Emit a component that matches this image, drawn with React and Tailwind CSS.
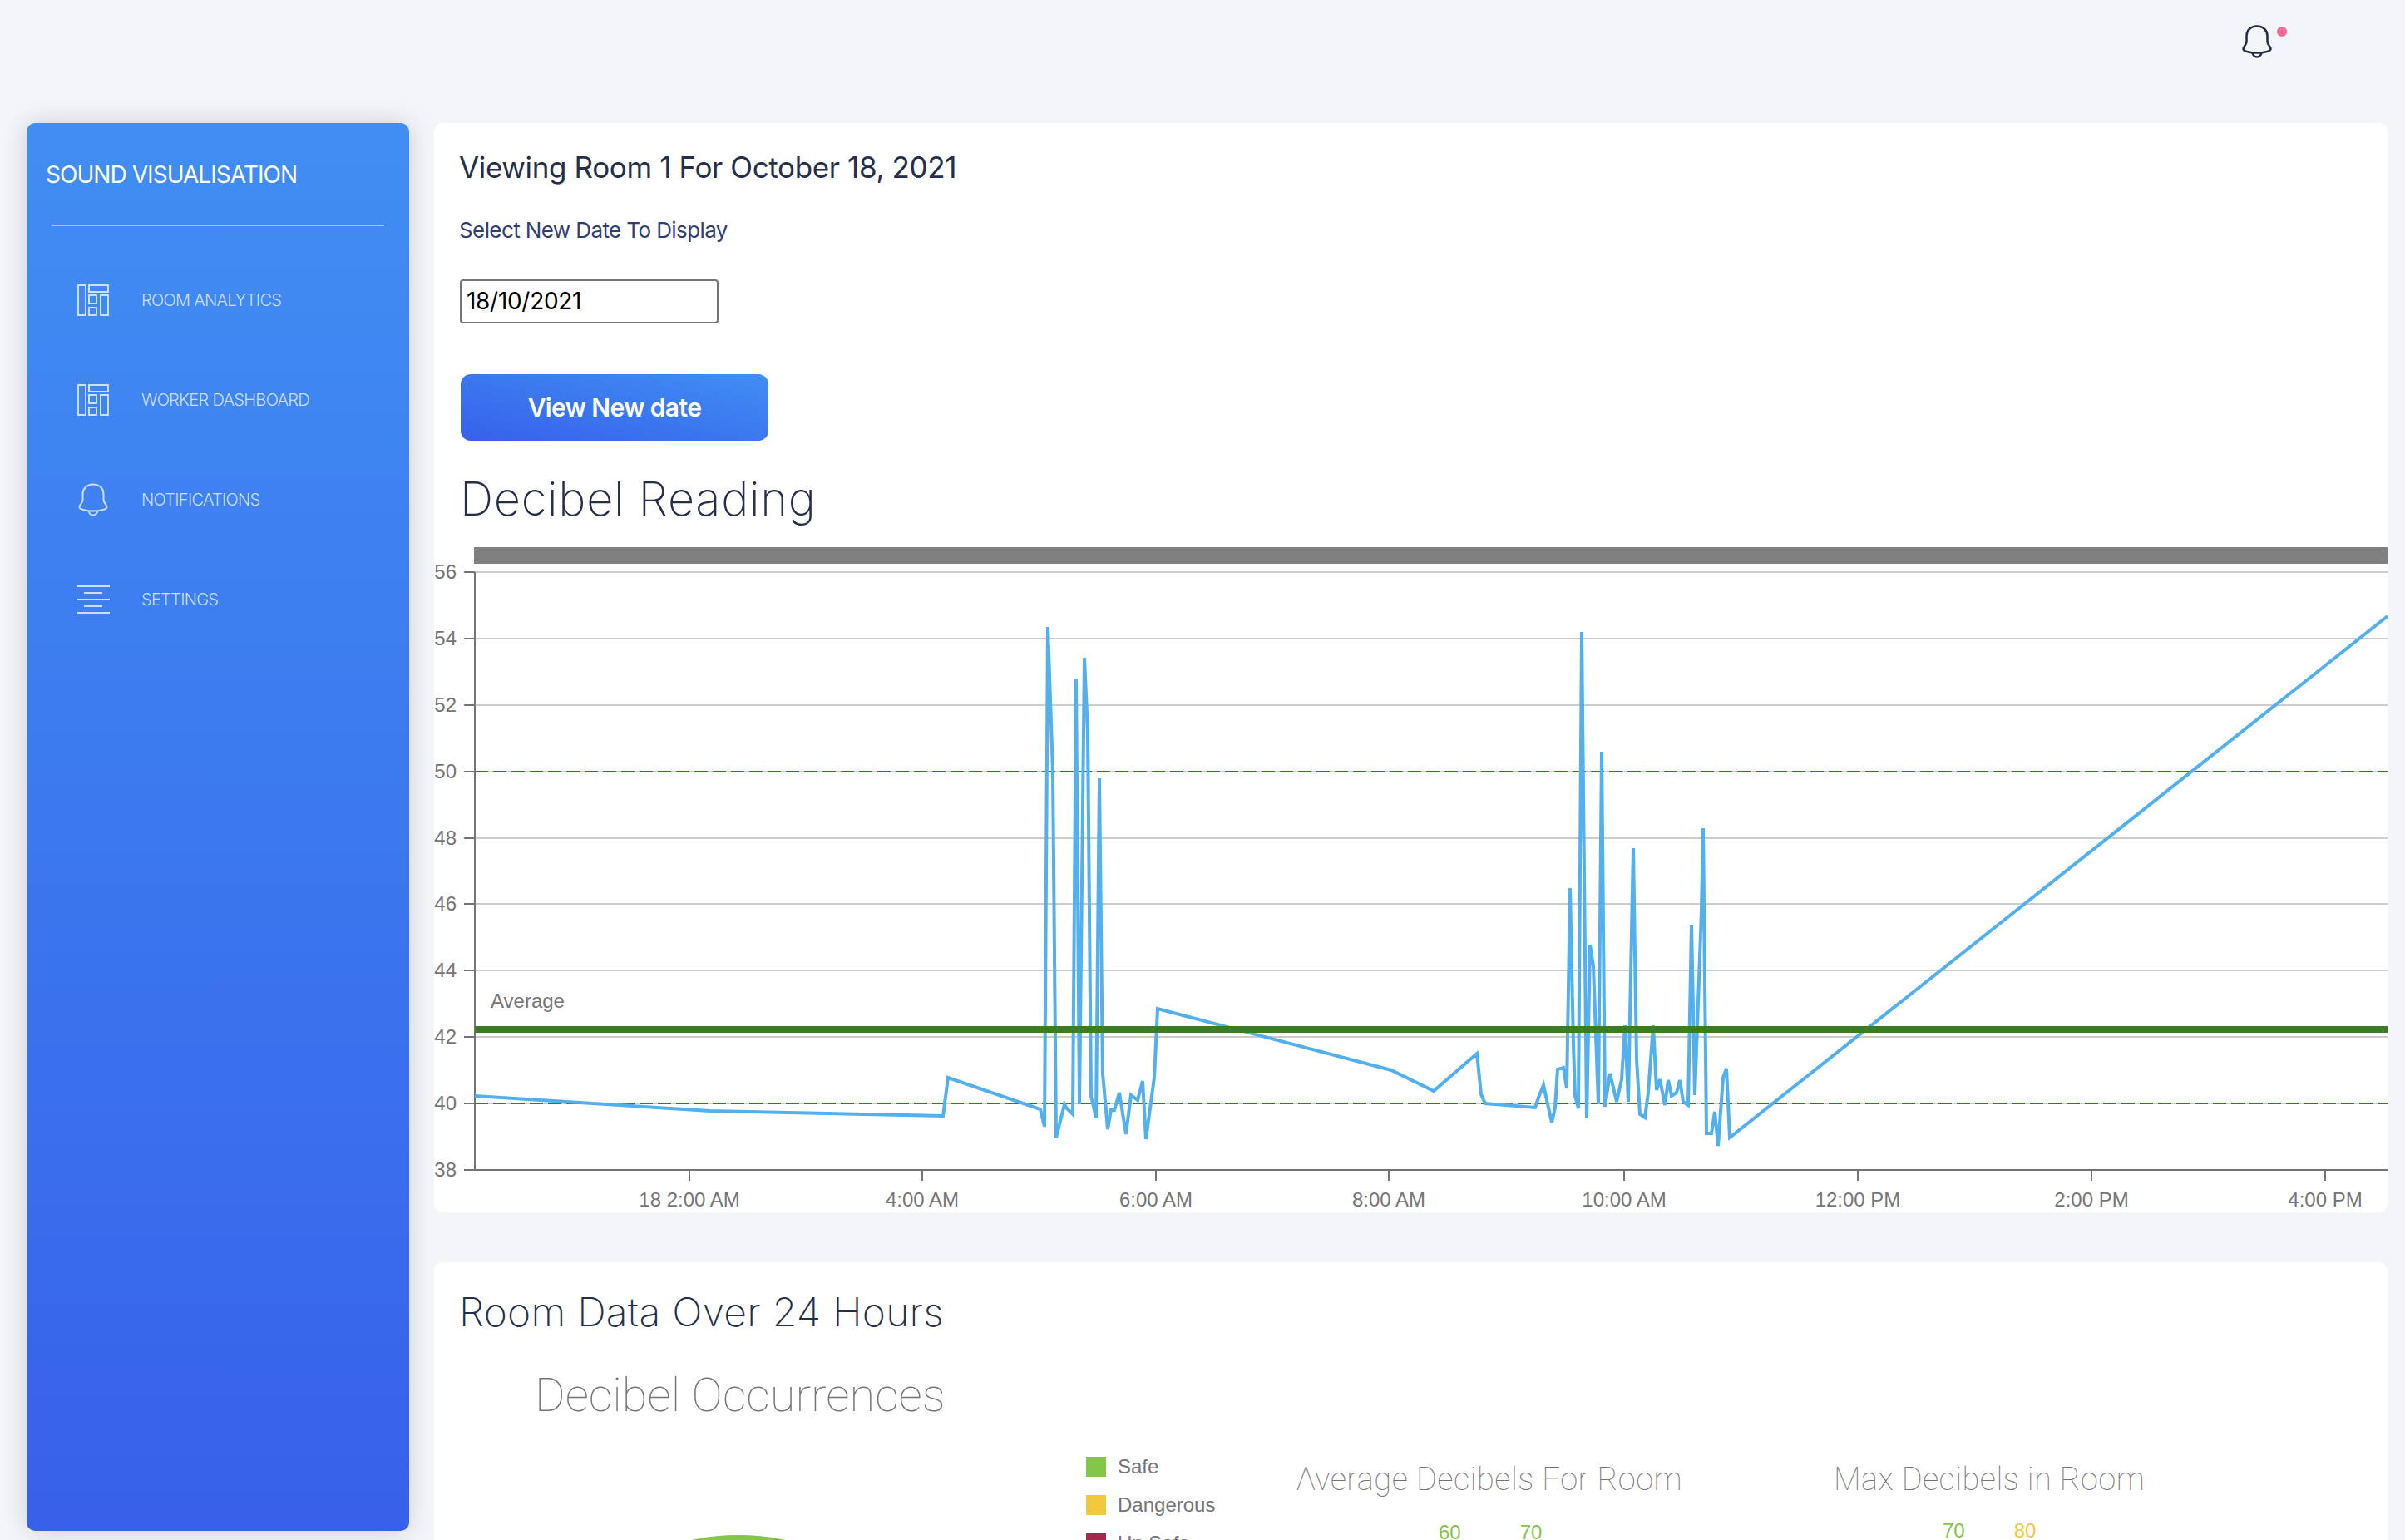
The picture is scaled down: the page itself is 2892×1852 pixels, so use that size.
const pts = [[571,1318],[854,1336],[1134,1342],[1140,1296],[1251,1334],[1256,1355],[1260,754],[1266,928],[1270,1368],[1280,1328],[1282,1332],[1290,1340],[1294,816],[1298,1328],[1304,791],[1308,881],[1312,1318],[1318,1344],[1322,936],[1326,1291],[1332,1358],[1336,1335],[1340,1335],[1346,1314],[1354,1364],[1360,1317],[1368,1323],[1374,1300],[1378,1370],[1388,1296],[1392,1213],[1673,1287],[1724,1312],[1776,1267],[1781,1316],[1786,1327],[1846,1332],[1850,1320],[1856,1305],[1866,1350],[1870,1332],[1873,1286],[1880,1284],[1884,1309],[1888,1068],[1892,1256],[1894,1318],[1898,1333],[1902,760],[1908,1345],[1912,1136],[1916,1162],[1922,1328],[1926,904],[1930,1331],[1936,1291],[1944,1325],[1950,1298],[1954,1233],[1958,1325],[1964,1020],[1968,1274],[1972,1340],[1978,1344],[1982,1314],[1988,1233],[1992,1311],[1996,1298],[2002,1329],[2006,1299],[2010,1318],[2016,1314],[2020,1299],[2024,1325],[2030,1329],[2034,1112],[2038,1317],[2046,1095],[2048,996],[2052,1363],[2058,1363],[2062,1337],[2066,1378],[2072,1296],[2076,1285],[2080,1368],[2871,741]];
const linePath = pts.map(p => p.join(",")).join(" ");
const yTicks = [56,54,52,50,48,46,44,42,40,38];
const xTicks = [["18 2:00 AM",829],["4:00 AM",1109],["6:00 AM",1390],["8:00 AM",1670],["10:00 AM",1953],["12:00 PM",2234],["2:00 PM",2515],["4:00 PM",2796]];
const yOf = v => Math.round(1407 - (v - 38) * 39.95);
const SANS = "font-['Liberation_Sans',sans-serif]";

function Dash() {
  return (
    <svg width="38" height="38" viewBox="0 0 38 38" fill="none" stroke="currentColor" strokeWidth="2">
      <rect x="1" y="1" width="9" height="36" />
      <rect x="14" y="1" width="23" height="8" />
      <rect x="14" y="13" width="9" height="10" />
      <rect x="14" y="28" width="9" height="9" />
      <rect x="28" y="13" width="9" height="24" />
    </svg>
  );
}
function Bell({ sw = 2 }) {
  return (
    <svg width="36" height="40" viewBox="0 0 36 40" fill="none" stroke="currentColor" strokeWidth={sw} strokeLinejoin="round">
      <path d="M18 1.5C10 1.5 5.500 7 5.500 13V20C5.500 24 1.500 25.500 1.500 29C1.500 31.500 10 33.500 18 33.500C26 33.500 34.500 31.500 34.500 29C34.500 25.500 30.500 24 30.500 20V13C30.500 7 26 1.500 18 1.500Z" />
      <path d="M12.500 33.500C13.500 37 15.500 38.500 18 38.500C20.500 38.500 22.500 37 23.500 33.500" />
    </svg>
  );
}
function Lines() {
  return (
    <svg width="40" height="34" viewBox="0 0 40 34" fill="none" stroke="currentColor" strokeWidth="2">
      <path d="M0 1H40M9 9H31M0 17H40M9 25H31M0 33H40" />
    </svg>
  );
}
const nav = [
  ["ROOM ANALYTICS", <Dash />],
  ["WORKER DASHBOARD", <Dash />],
  ["NOTIFICATIONS", <Bell sw={2} />],
  ["SETTINGS", <Lines />],
];
const THIN = "font-['Roboto',sans-serif] font-thin";

export default function App() {
  return (
    <div className="w-[2892px] h-[1852px] overflow-hidden bg-[#f4f5f9] font-['Inter',sans-serif]">
      <header className="h-[148px] flex justify-end">
        <div className="relative mr-[160px] mt-[30px] w-[36px] h-[40px] text-[#1f2a44]">
          <Bell sw={2.5} />
          <span className="absolute left-[42px] top-[2px] w-[12px] h-[12px] rounded-full bg-[#f06a95]" />
        </div>
      </header>
      <div className="flex items-start">
        <aside className="ml-[32px] w-[460px] h-[1693px] shrink-0 rounded-[10px] bg-gradient-to-b from-[#418ef3] to-[#3860ea] shadow-[0_0_30px_rgba(0,0,0,0.16)] pt-[46px]">
          <div className="pl-[23px] h-[32px] leading-[32px] text-[28px] tracking-[-0.95px] text-white whitespace-nowrap">SOUND VISUALISATION</div>
          <div className="mt-[44px] mx-[30px] h-[2px] bg-white/50" />
          <nav className="mt-[29px]">
            {nav.map(([label, icon]) => (
              <div key={label} className="h-[120px] flex items-center pl-[60px] text-[#cfdffa]">
                <div className="w-[40px] h-[40px] flex items-center justify-center shrink-0">{icon}</div>
                <span className="ml-[38px] text-[20px] tracking-[-0.7px] font-light whitespace-nowrap">{label}</span>
              </div>
            ))}
          </nav>
        </aside>
        <main className="ml-[30px] w-[2349px] shrink-0">
          <section className="h-[1310px] rounded-[10px] bg-white overflow-hidden">
            <div className="pl-[30px] pt-[29px] pb-[12px]">
              <h1 className="h-[48px] leading-[48px] text-[35px] tracking-[-0.37px] text-[#252f4a] whitespace-nowrap">Viewing Room 1 For October 18, 2021</h1>
              <p className="mt-[32px] h-[40px] leading-[40px] text-[26px] tracking-[-0.6px] text-[#2f3e78] whitespace-nowrap">Select New Date To Display</p>
              <div className="mt-[39px] ml-[1px] w-[311px] h-[53px] border-2 border-[#767676] rounded-[4px] pl-[6px] leading-[49px] text-[28px] tracking-[-0.3px] text-black">18/10/2021</div>
              <button className="block mt-[61px] ml-[2px] w-[370px] h-[80px] rounded-[12px] bg-gradient-to-tr from-[#3860ea] to-[#418ef3] text-white text-[30px] tracking-[-0.6px] font-semibold">View New date</button>
              <h2 className="mt-[32px] ml-[1px] h-[76px] leading-[76px] text-[56px] tracking-[0.7px] font-extralight text-[#252f4a] whitespace-nowrap">Decibel Reading</h2>
            </div>
            <svg className="block" width="2349" height="808" viewBox="522 650 2349 808">
              <rect x="570" y="658" width="2301" height="20" fill="#808080" />
              {yTicks.map(v => (
                <g key={v}>
                  {v !== 38 && <line x1="571" x2="2871" y1={yOf(v)} y2={yOf(v)} stroke="#cccccc" strokeWidth="2" />}
                  <line x1="558" x2="571" y1={yOf(v)} y2={yOf(v)} stroke="#757575" strokeWidth="2" />
                  <text x="549" y={yOf(v) + 8} textAnchor="end" fontSize="24" fill="#757575" fontFamily="Liberation Sans">{v}</text>
                </g>
              ))}
              <line x1="571" x2="571" y1="688" y2="1408" stroke="#757575" strokeWidth="2" />
              <line x1="558" x2="2871" y1="1407" y2="1407" stroke="#757575" strokeWidth="2" />
              {xTicks.map(([t, x]) => (
                <g key={t}>
                  <line x1={x} x2={x} y1="1407" y2="1420" stroke="#757575" strokeWidth="2" />
                  <text x={x} y="1451" textAnchor="middle" fontSize="24" fill="#757575" fontFamily="Liberation Sans">{t}</text>
                </g>
              ))}
              <line x1="571" x2="2871" y1={yOf(50)} y2={yOf(50)} stroke="#3a7d23" strokeWidth="2" strokeDasharray="16 6" />
              <line x1="571" x2="2871" y1={yOf(40)} y2={yOf(40)} stroke="#3a7d23" strokeWidth="2" strokeDasharray="16 6" />
              <polyline points={linePath} fill="none" stroke="#52b0ef" strokeWidth="4" strokeLinejoin="miter" />
              <rect x="571" y="1234" width="2300" height="8" fill="#3a7d23" />
              <text x="590" y="1212" fontSize="24" fill="#757575" fontFamily="Liberation Sans">Average</text>
            </svg>
          </section>
          <section className="mt-[60px] h-[400px] rounded-[10px] bg-white pt-[28px] pl-[31px] overflow-hidden">
            <h2 className="-ml-[1px] h-[64px] leading-[64px] text-[48px] tracking-[0.25px] font-extralight text-[#252f4a] whitespace-nowrap">Room Data Over 24 Hours</h2>
            <div className="mt-[32px] flex items-start">
              <div className="w-[1006px] shrink-0">
                <h3 className={`pl-[90px] h-[72px] leading-[72px] text-[56px] text-[#757575] whitespace-nowrap ${THIN}`}>Decibel Occurrences</h3>
                <div className="mt-[38px] flex items-start">
                  <div className="w-[753px] h-[300px] shrink-0 pt-[94px]">
                    <svg className="block" width="753" height="540" viewBox="0 0 753 540"><circle cx="335" cy="270" r="270" fill="#84c54b" /></svg>
                  </div>
                  <ul className={`flex flex-col gap-[22px] text-[24px] text-[#757575] ${SANS}`}>
                    <li className="flex items-center h-[24px]"><i className="w-[24px] h-[24px] bg-[#84c54b] mr-[14px]" />Safe</li>
                    <li className="flex items-center h-[24px]"><i className="w-[24px] h-[24px] bg-[#f3c83f] mr-[14px]" />Dangerous</li>
                    <li className="flex items-center h-[24px]"><i className="w-[24px] h-[24px] bg-[#a6294d] mr-[14px]" />Un Safe</li>
                  </ul>
                </div>
              </div>
              <div className="w-[647px] shrink-0 pt-[112px]">
                <h3 className={`h-[50px] leading-[50px] text-[38px] tracking-[0.5px] text-[#757575] whitespace-nowrap ${THIN}`}>Average Decibels For Room</h3>
                <div className={`mt-[27px] ml-[171px] flex gap-[71px] text-[24px] leading-[24px] text-[#84c54b] ${SANS}`}><span>60</span><span>70</span></div>
              </div>
              <div className="pt-[112px] -ml-[1px]">
                <h3 className={`h-[50px] leading-[50px] text-[38px] tracking-[0.45px] text-[#757575] whitespace-nowrap ${THIN}`}>Max Decibels in Room</h3>
                <div className={`mt-[25px] ml-[131px] flex gap-[59px] text-[24px] leading-[24px] ${SANS}`}><span className="text-[#84c54b]">70</span><span className="text-[#f3c83f]">80</span></div>
              </div>
            </div>
          </section>
        </main>
      </div>
    </div>
  );
}
